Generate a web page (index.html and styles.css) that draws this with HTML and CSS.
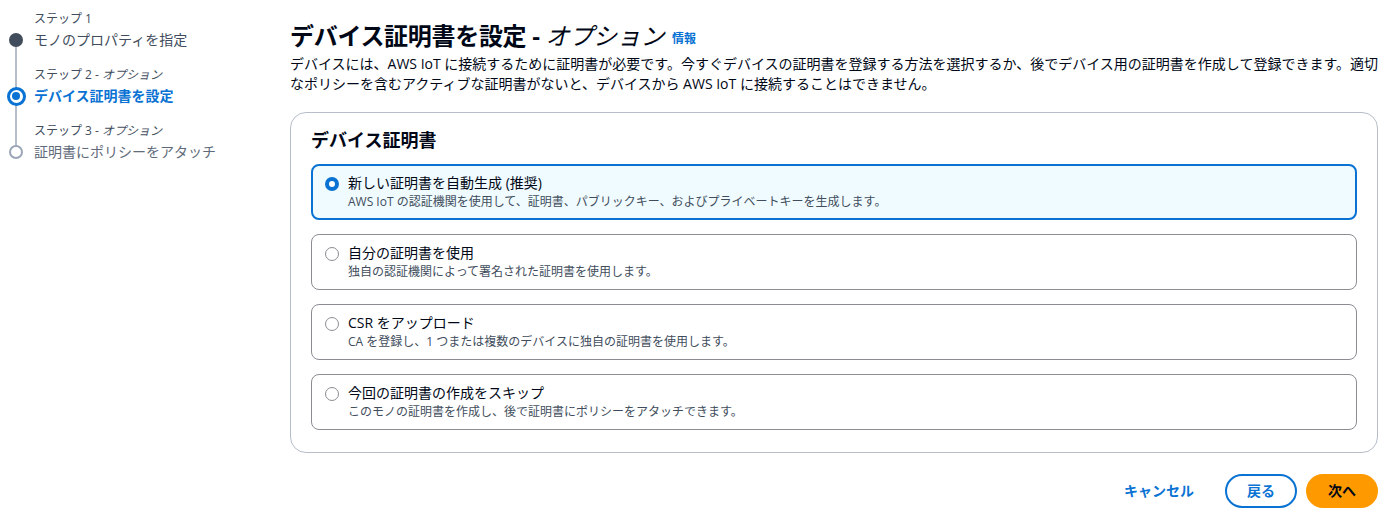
FILE: index.html
```html
<!DOCTYPE html>
<html lang="ja">
<head>
<meta charset="utf-8">
<link rel="stylesheet" href="styles.css">
</head>
<body>
<div class="page">
  <nav class="steps">
    <div class="step step-first">
      <div class="rail"><div class="rail-line"></div><div class="icon-box"><span class="dot dot-done"></span></div></div>
      <div class="step-text">
        <div class="step-label">ステップ 1</div>
        <div class="step-title">モノのプロパティを指定</div>
      </div>
    </div>
    <div class="step step-mid">
      <div class="rail"><div class="rail-line"></div><div class="icon-box"><span class="dot dot-current"></span></div></div>
      <div class="step-text">
        <div class="step-label">ステップ 2 - <i>オプション</i></div>
        <div class="step-title current">デバイス証明書を設定</div>
      </div>
    </div>
    <div class="step step-last">
      <div class="rail"><div class="rail-line"></div><div class="icon-box"><span class="dot dot-todo"></span></div></div>
      <div class="step-text">
        <div class="step-label">ステップ 3 - <i>オプション</i></div>
        <div class="step-title todo">証明書にポリシーをアタッチ</div>
      </div>
    </div>
  </nav>
  <main class="main">
    <h1 class="title">デバイス証明書を設定 - <span class="opt">オプション</span><a class="info">情報</a></h1>
    <p class="desc">デバイスには、AWS IoT に接続するために証明書が必要です。今すぐデバイスの証明書を登録する方法を選択するか、後でデバイス用の証明書を作成して登録できます。適切なポリシーを含むアクティブな証明書がないと、デバイスから AWS IoT に接続することはできません。</p>
    <section class="container">
      <h2 class="container-title">デバイス証明書</h2>
      <div class="tiles">
        <div class="tile selected">
          <span class="radio on"></span>
          <div class="tile-text">
            <div class="tile-title">新しい証明書を自動生成 (推奨)</div>
            <div class="tile-desc">AWS IoT の認証機関を使用して、証明書、パブリックキー、およびプライベートキーを生成します。</div>
          </div>
        </div>
        <div class="tile">
          <span class="radio"></span>
          <div class="tile-text">
            <div class="tile-title">自分の証明書を使用</div>
            <div class="tile-desc">独自の認証機関によって署名された証明書を使用します。</div>
          </div>
        </div>
        <div class="tile">
          <span class="radio"></span>
          <div class="tile-text">
            <div class="tile-title">CSR をアップロード</div>
            <div class="tile-desc">CA を登録し、1 つまたは複数のデバイスに独自の証明書を使用します。</div>
          </div>
        </div>
        <div class="tile">
          <span class="radio"></span>
          <div class="tile-text">
            <div class="tile-title">今回の証明書の作成をスキップ</div>
            <div class="tile-desc">このモノの証明書を作成し、後で証明書にポリシーをアタッチできます。</div>
          </div>
        </div>
      </div>
    </section>
    <div class="actions">
      <button class="btn btn-link">キャンセル</button>
      <button class="btn btn-normal">戻る</button>
      <button class="btn btn-primary">次へ</button>
    </div>
  </main>
</div>
</body>
</html>
```
FILE: styles.css
```css
* { box-sizing: border-box; }
html, body { margin: 0; padding: 0; background: #ffffff; }
body {
  font-family: "Open Sans", "Noto Sans CJK JP", sans-serif;
  color: #000716;
  width: 1386px;
  height: 512px;
  overflow: hidden;
}
.page {
  display: grid;
  grid-template-columns: 290px 1088px;
}

/* steps nav */
.steps {
  display: flex;
  flex-direction: column;
  padding-top: 11px;
}
.step {
  display: flex;
}
.rail {
  width: 32px;
  flex: none;
  display: flex;
  flex-direction: column;
  align-items: center;
}
.rail-line {
  flex: 1;
  width: 2px;
  background: #b6bec9;
}
.step-first .rail-line { background: transparent; }
.icon-box {
  height: 20px;
  width: 32px;
  display: flex;
  align-items: center;
  justify-content: center;
  background: linear-gradient(#b6bec9, #b6bec9) center / 2px 100% no-repeat;
}
.step-first .icon-box { background: linear-gradient(#b6bec9, #b6bec9) center bottom / 2px 50% no-repeat; }
.step-last .icon-box { background: linear-gradient(#b6bec9, #b6bec9) center top / 2px 50% no-repeat; }
.dot {
  display: block;
  border-radius: 50%;
}
.dot-done {
  width: 14px; height: 14px;
  background: #414d5c;
}
.dot-current {
  width: 19px; height: 19px;
  border: 3px solid #0972d3;
  background: #ffffff;
  position: relative;
}
.dot-current::after {
  content: "";
  position: absolute;
  left: 50%; top: 50%;
  width: 8px; height: 8px;
  margin: -4px 0 0 -4px;
  border-radius: 50%;
  background: #0972d3;
}
.dot-todo {
  width: 14px; height: 14px;
  border: 2px solid #9ba7b6;
  background: #ffffff;
}
.step-text {
  padding-left: 2px;
}
.step-mid .step-text, .step-last .step-text { padding-top: 17px; }
.step-label {
  font-size: 12px;
  line-height: 16px;
  color: #414d5c;
  margin-bottom: 3px;
}
.step-label i { font-style: italic; }
.step-title {
  font-size: 14px;
  line-height: 20px;
  color: #414d5c;
}
.step-title.current { color: #0972d3; font-weight: 700; }
.step-title.todo { color: #5f6b7a; }

/* main */
.main {
  padding-top: 21px;
}
.title {
  margin: 0;
  height: 30px;
  font-size: 24px;
  line-height: 30px;
  font-weight: 700;
  color: #000716;
  letter-spacing: -0.3px;
}
.opt {
  font-style: italic;
  font-weight: 400;
}
.info {
  font-size: 12px;
  line-height: 12px;
  font-weight: 700;
  color: #0972d3;
  margin-left: 8px;
  letter-spacing: 0;
  vertical-align: 2px;
}
.desc {
  margin: 3px 0 0;
  font-size: 14px;
  line-height: 20px;
  color: #000716;
}
.container {
  margin-top: 18px;
  border: 1px solid #b6bec9;
  border-radius: 16px;
  padding: 16px 20px 22px;
}
.container-title {
  margin: 0;
  font-size: 18px;
  line-height: 22px;
  font-weight: 700;
}
.tiles {
  margin-top: 13px;
  display: flex;
  flex-direction: column;
  gap: 14px;
}
.tile {
  display: flex;
  align-items: flex-start;
  gap: 9px;
  height: 56px;
  border: 1px solid #8c8c94;
  border-radius: 8px;
  padding: 8px 13px 0;
}
.tile.selected {
  border: 2px solid #0972d3;
  background: #f0fbff;
  padding: 7px 12px 0;
}
.radio {
  flex: none;
  width: 14px;
  height: 14px;
  margin-top: 4px;
  border-radius: 50%;
  border: 1.5px solid #8c8c94;
  background: #ffffff;
}
.radio.on {
  border: 4px solid #0972d3;
}
.tile-title {
  font-size: 14px;
  line-height: 20px;
  color: #000716;
}
.tile-desc {
  margin-top: 1px;
  font-size: 12px;
  line-height: 16px;
  color: #414d5c;
}

/* actions */
.actions {
  margin-top: 21px;
  display: flex;
  justify-content: flex-end;
  gap: 9px;
}
.btn {
  font-family: "Open Sans", "Noto Sans CJK JP", sans-serif;
  font-size: 14px;
  line-height: 22px;
  font-weight: 700;
  padding: 4px 20px;
  border-radius: 20px;
  border: 2px solid transparent;
  background: transparent;
  cursor: pointer;
}
.btn-link { color: #0972d3; }
.btn-normal {
  color: #0972d3;
  border-color: #0972d3;
  background: #ffffff;
}
.btn-primary {
  background: #ff9900;
  border-color: #ff9900;
  color: #000716;
}
```
